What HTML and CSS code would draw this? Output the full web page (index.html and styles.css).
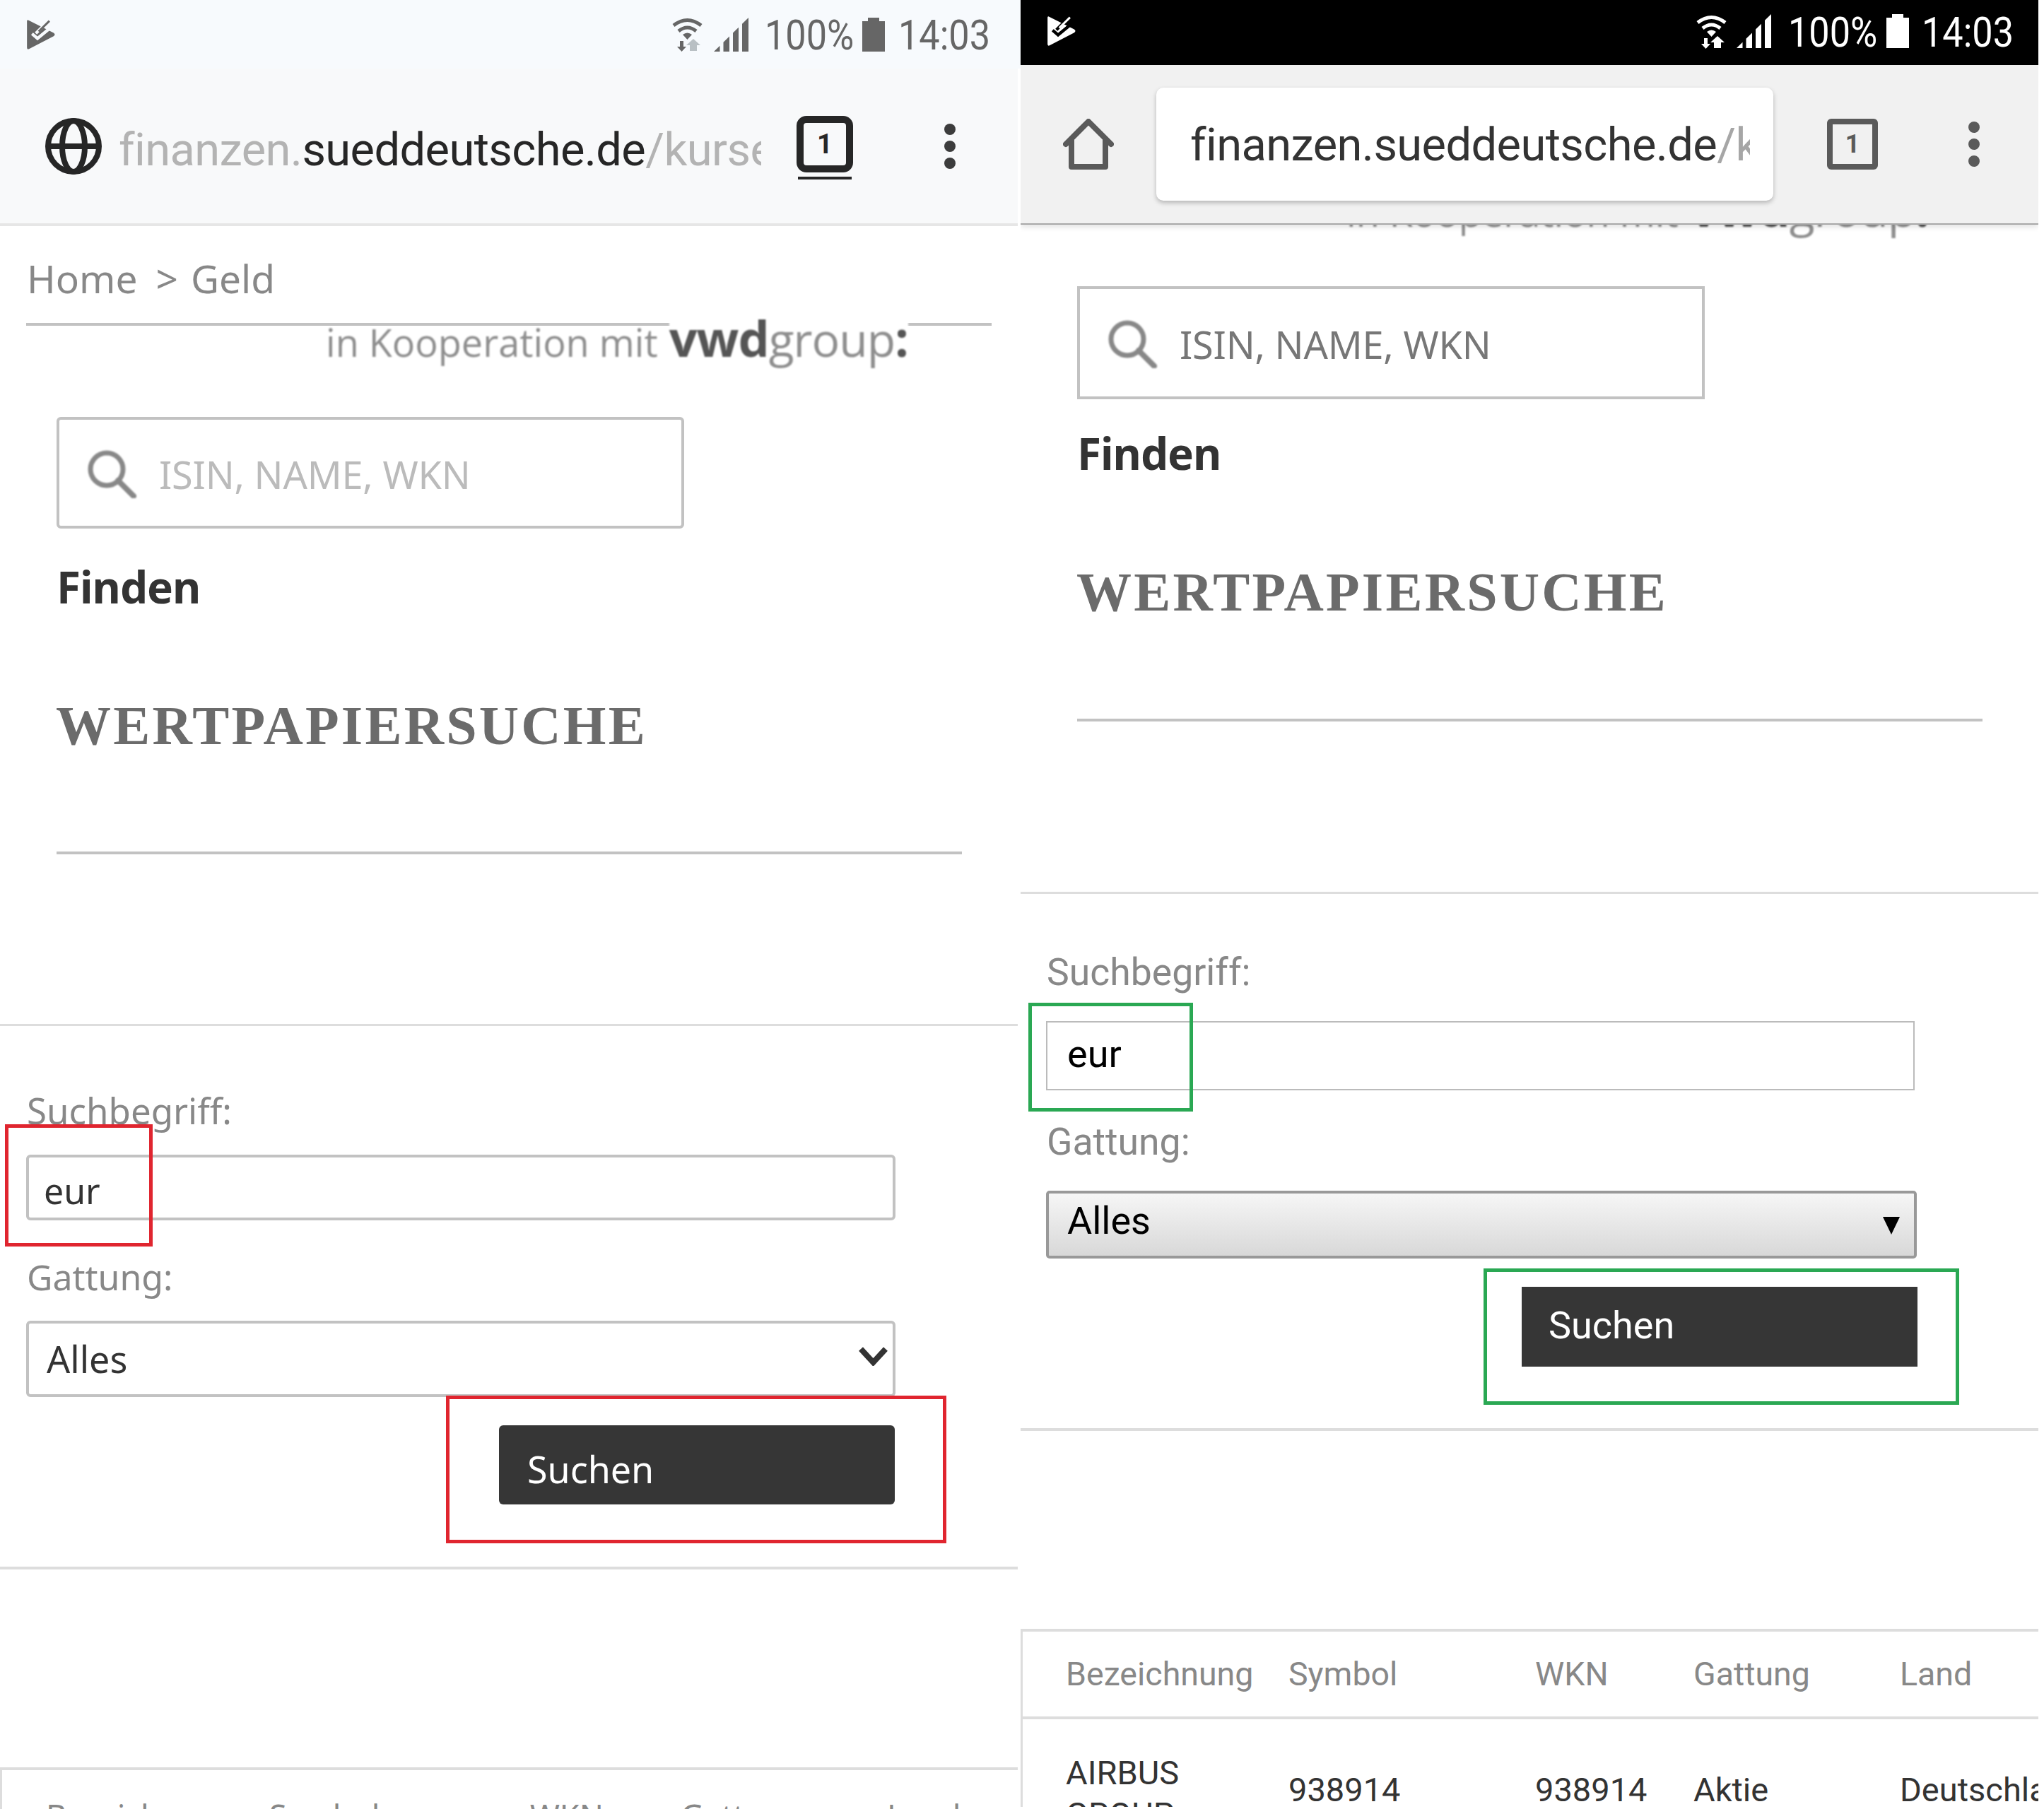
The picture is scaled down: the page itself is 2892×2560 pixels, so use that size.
FILE: index.html
```html
<!DOCTYPE html>
<html lang="de">
<head>
<meta charset="utf-8">
<title>Wertpapiersuche</title>
<link rel="stylesheet" href="styles.css">
</head>
<body>
<svg class="defs" aria-hidden="true">
  <symbol id="kid" viewBox="0 0 120 127">
    <path class="kid-body" d="M0 6Q0-2 7 2L114 56Q124 63 114 70L9 125Q0 129 0 119Z"/>
    <path class="kid-cut" d="M22 60 45 80 108 28M38 58 100-4"/>
    <path class="kid-cut thin" d="M22 60 45 80 92 40"/>
    <path class="kid-arm" d="M50 50 96 5"/>
  </symbol>
  <symbol id="signal" viewBox="0 0 49 48">
    <path d="M0 48 8.500 39.700V48ZM13.500 34.800 22 26.500V48H13.500ZM27 21.600 35 13.700V48H27ZM40 8.800 49 0V48H40Z"/>
  </symbol>
  <symbol id="battery" viewBox="0 0 32 48">
    <path d="M8 0H24V5H32V48H0V5H8Z"/>
  </symbol>
  <symbol id="globe" viewBox="0 0 80 80">
    <g class="line" stroke-width="8"><circle cx="40" cy="40" r="36"/><ellipse cx="40" cy="40" rx="16" ry="36"/><path d="M4 40H76"/></g>
  </symbol>
  <symbol id="home" viewBox="0 0 72 72">
    <g class="line" stroke-width="8" stroke-linecap="round" stroke-linejoin="round"><path d="M4 36 36 4 68 36"/><path d="M12 30V68H60V30"/></g>
  </symbol>
  <symbol id="lens" viewBox="0 0 69 68">
    <g class="line"><circle cx="27" cy="27" r="23" stroke-width="7"/><path d="M43 43 65 65" stroke-width="8" stroke-linecap="round"/></g>
  </symbol>
</svg>

<main class="sheet">
  <section class="phone phone-a">
    <header class="status">
      <svg class="kid"><use href="#kid"/></svg>
      <div class="status-right">
        <svg class="wifi" viewBox="0 0 43 49"><g class="line" stroke-width="5"><path d="M2 12Q21.500-3 41 12"/><path d="M9 20Q21.500 10 34 20"/></g><path d="M15 25Q21.500 20 28 25L21.500 32ZM11 34H16V42H20L13.500 49 7 42H11Z"/><path class="arrow-up" d="M25 48V40H20L30 31 40 40H35V48Z"/></svg>
        <svg class="signal"><use href="#signal"/></svg>
        <span class="pct">100%</span>
        <svg class="battery"><use href="#battery"/></svg>
        <span class="clock">14:03</span>
      </div>
    </header>
    <nav class="toolbar">
      <svg class="globe"><use href="#globe"/></svg>
      <div class="url"><span class="dim">finanzen.</span><span class="host">sueddeutsche.de</span><span class="dim">/kurse</span></div>
      <div class="tabs"><span class="tab-num">1</span></div>
      <div class="dots"><i></i><i></i><i></i></div>
    </nav>
    <div class="crumbs"><span>Home</span><span class="sep">&gt;</span><span>Geld</span></div>
    <div class="logo"><span class="logo-lead">in Kooperation mit</span><span class="logo-mark"><b>vwd</b><span class="logo-group">group</span><b class="logo-colon">:</b></span></div>
    <div class="search"><svg class="lens"><use href="#lens"/></svg><span class="placeholder">ISIN, NAME, WKN</span></div>
    <div class="finden">Finden</div>
    <h1 class="title">WERTPAPIERSUCHE</h1>
    <div class="rule"></div>
    <div class="divider first"></div>
    <form class="form">
      <div class="label term">Suchbegriff:</div>
      <div class="input">eur</div>
      <div class="label kind">Gattung:</div>
      <div class="select"><span>Alles</span><svg class="chevron" viewBox="0 0 41 27"><path class="line" stroke-width="8" d="M3 3 20.500 22 38 3"/></svg></div>
      <div class="submit">Suchen</div>
    </form>
    <div class="divider second"></div>
    <div class="table">
      <div class="thead"><span>Bezeichnung</span><span>Symbol</span><span>WKN</span><span>Gattung</span><span>Land</span></div>
    </div>
    <div class="mark mark-term"></div>
    <div class="mark mark-submit"></div>
  </section>

  <section class="phone phone-b">
    <header class="status">
      <svg class="kid"><use href="#kid"/></svg>
      <div class="status-right">
        <svg class="wifi" viewBox="0 0 43 49"><g class="line" stroke-width="5"><path d="M2 12Q21.500-3 41 12"/><path d="M9 20Q21.500 10 34 20"/></g><path d="M15 25Q21.500 20 28 25L21.500 32ZM11 34H16V42H20L13.500 49 7 42H11Z"/><path class="arrow-up" d="M25 48V40H20L30 31 40 40H35V48Z"/></svg>
        <svg class="signal"><use href="#signal"/></svg>
        <span class="pct">100%</span>
        <svg class="battery"><use href="#battery"/></svg>
        <span class="clock">14:03</span>
      </div>
    </header>
    <nav class="toolbar">
      <svg class="home"><use href="#home"/></svg>
      <div class="omnibox"><div class="url"><span class="host">finanzen.sueddeutsche.de</span><span class="dim">/k</span></div></div>
      <div class="tabs"><span class="tab-num">1</span></div>
      <div class="dots"><i></i><i></i><i></i></div>
    </nav>
    <div class="logo"><span class="logo-lead">in Kooperation mit</span><span class="logo-mark"><b>vwd</b><span class="logo-group">group</span><b class="logo-colon">:</b></span></div>
    <div class="search"><svg class="lens"><use href="#lens"/></svg><span class="placeholder">ISIN, NAME, WKN</span></div>
    <div class="finden">Finden</div>
    <h1 class="title">WERTPAPIERSUCHE</h1>
    <div class="rule"></div>
    <div class="divider first"></div>
    <form class="form">
      <div class="label term">Suchbegriff:</div>
      <div class="input">eur</div>
      <div class="label kind">Gattung:</div>
      <div class="select"><span>Alles</span><svg class="caret" viewBox="0 0 24 25"><path d="M0 0H24L12 25Z"/></svg></div>
      <div class="submit">Suchen</div>
    </form>
    <div class="divider second"></div>
    <div class="table">
      <div class="thead"><span>Bezeichnung</span><span>Symbol</span><span>WKN</span><span>Gattung</span><span>Land</span></div>
      <div class="trow"><span class="name">AIRBUS GROUP</span><span>938914</span><span>938914</span><span>Aktie</span><span>Deutschland</span></div>
    </div>
    <div class="mark mark-term"></div>
    <div class="mark mark-submit"></div>
  </section>
</main>
</body>
</html>
```
FILE: styles.css
```css
* { box-sizing: border-box; }
html, body { margin: 0; padding: 0; background: #fff; }
.defs { position: absolute; width: 0; height: 0; }
.line { fill: none; stroke: currentColor; }

.sheet { display: flex; width: 2892px; height: 2560px; overflow: hidden; }
.phone { position: relative; flex: none; overflow: hidden; background: #fff; font-family: "Noto Sans", sans-serif; }
.phone-a { width: 1444px; height: 2560px; }
.phone-b { width: 1440px; height: 2557px; font-family: Roboto, sans-serif; }

/* status bar */
.status { display: flex; align-items: center; justify-content: space-between; font-family: Roboto, sans-serif; }
.phone-a .status { height: 97px; padding: 0 45px 0 38px; background: #f7fafd; color: #666; --cut: #f7fafd; --up: #b9c0c4; }
.phone-b .status { height: 92px; padding: 0 36px 4px 38px; background: #000; color: #fff; --cut: #000; --up: #fff; }
.status svg { fill: currentColor; flex: none; }
.kid { width: 40px; height: 42px; }
.kid-body { fill: currentColor; }
.kid-cut { fill: none; stroke: var(--cut); stroke-width: 13; }
.kid-cut.thin { stroke-width: 10; }
.kid-arm { fill: none; stroke: currentColor; stroke-width: 9; }
.status-right { display: flex; align-items: center; }
.wifi { width: 43px; height: 49px; }
.arrow-up { fill: var(--up); }
.signal { width: 49px; height: 48px; margin-left: 16px; }
.pct, .clock { display: block; height: 60px; margin-top: 3px; font-size: 60px; line-height: 60px; white-space: nowrap; transform: scaleX(.87); transform-origin: left center; }
.pct { width: 124px; margin-left: 23px; }
.clock { width: 128px; margin-left: 19px; }
.battery { width: 32px; height: 48px; margin-left: 14px; }
.phone-b .signal { margin-left: 14px; }
.phone-b .pct { width: 126px; margin-left: 24px; }
.phone-b .battery { margin-left: 13px; }
.phone-b .clock { width: 129px; margin-left: 18px; }

/* toolbar */
.toolbar { position: relative; z-index: 2; display: flex; align-items: center; font-family: Roboto, sans-serif; font-size: 65px; letter-spacing: -.6px; }
.phone-a .toolbar { width: 1440px; height: 223px; border-bottom: 4px solid #e6e6e6; background: #f8f9fa; color: #262626; }
.phone-b .toolbar { height: 224px; background: #f1f1f1; color: #5a5a5a; box-shadow: 0 2px 0 #a8a8a8, 0 5px 8px rgba(0,0,0,.12); }
.globe { flex: none; width: 80px; height: 80px; margin-left: 64px; }
.home { flex: none; width: 72px; height: 72px; margin-left: 60px; }
.url { overflow: hidden; white-space: nowrap; line-height: 90px; }
.phone-a .url { width: 909px; margin-left: 24px; padding-top: 10px; }
.phone-b .url { width: 792px; padding-top: 2px; color: #333; }
.dim { color: #b3b3b3; }
.phone-b .dim { color: #a6a6a6; }
.host { color: #262626; }
.phone-b .host { color: #333; }
.omnibox { flex: none; width: 873px; height: 160px; margin-left: 60px; padding-left: 48px; display: flex; align-items: center; background: #fff; border-radius: 10px; box-shadow: 0 3px 6px rgba(0,0,0,.25); }
.tabs { position: relative; flex: none; display: flex; align-items: center; justify-content: center; font-weight: 700; line-height: 1; letter-spacing: 0; }
.phone-a .tabs { width: 80px; height: 80px; margin-left: 50px; border: 10px solid #262626; border-radius: 14px; font-size: 38px; margin-top: -5px; }
.phone-a .tabs::after { content: ""; position: absolute; left: -8px; right: -8px; bottom: -20px; height: 4px; background: #262626; }
.phone-b .tabs { width: 72px; height: 72px; margin-left: 76px; border: 8px solid #5a5a5a; border-radius: 6px; font-size: 36px; }
.dots { flex: none; display: flex; flex-direction: column; gap: 8px; }
.phone-a .dots { margin-left: 129px; color: #3c3c3c; }
.phone-b .dots { margin-left: 128px; color: #5a5a5a; }
.dots i { display: block; width: 16px; height: 16px; border-radius: 50%; background: currentColor; }

/* breadcrumb */
.crumbs { display: flex; margin-left: 37px; width: 1366px; height: 141px; padding: 39px 0 0 1px; border-bottom: 4px solid #c2c2c2; font-size: 55px; line-height: 70px; color: #888; }
.sep { margin: 0 18px 0 26px; }

/* partner logo */
.logo { position: relative; display: flex; align-items: baseline; margin-left: 461px; width: 826px; height: 80px; color: #8e8e8e; font-family: "Open Sans", sans-serif; font-size: 54px; line-height: 66px; white-space: nowrap; filter: blur(.8px); }
.phone-a .logo { margin-top: -16px; }
.phone-b .logo { margin-top: -55px; }
.logo-mark { display: flex; align-items: baseline; margin-left: 16px; background: #fff; }
.logo-mark b { font-size: 70px; letter-spacing: -1px; color: #555; }
.logo-group { font-size: 66px; letter-spacing: -1px; color: #8e8e8e; }
.logo-colon { color: #444; }

/* search box */
.search { display: flex; align-items: center; gap: 32px; width: 888px; margin-left: 80px; padding-left: 40px; border: 4px solid #c2c2c2; }
.phone-a .search { height: 158px; margin-top: 65px; border-radius: 6px; }
.phone-b .search { height: 160px; margin-top: 64px; }
.lens { flex: none; width: 69px; height: 68px; color: #888; filter: blur(.8px); margin-top: 4px; }
.placeholder { font-family: "Noto Sans", sans-serif; font-size: 54px; letter-spacing: -.2px; line-height: 70px; padding-top: 3px; }
.phone-a .placeholder { color: #bbb; }
.phone-b .placeholder { color: #777; }

.finden { margin-left: 80px; height: 80px; font-family: "Noto Sans", sans-serif; font-weight: 700; font-size: 62px; letter-spacing: -1px; line-height: 80px; color: #333; }
.phone-a .finden { margin-top: 42px; }
.phone-b .finden { margin-top: 36px; }

.title { margin: 0 0 0 79px; height: 90px; font-family: "Liberation Serif", serif; font-weight: 700; font-size: 78px; line-height: 90px; letter-spacing: 3.2px; color: #6b6b6b; white-space: nowrap; }
.phone-a .title { margin-top: 112px; }
.phone-b .title { margin-top: 112px; }

.rule { height: 4px; width: 1281px; margin-left: 80px; background: #c2c2c2; }
.phone-a .rule { margin-top: 133px; }
.phone-b .rule { margin-top: 134px; }

.divider { background: #ddd; }
.phone-a .divider { width: 1440px; }
.divider.first { height: 3px; margin-top: 240px; }
.phone-b .divider.first { margin-top: 241px; }
.phone-a .divider.second { height: 4px; margin-top: 88px; }
.phone-b .divider.second { height: 4px; margin-top: 87px; }

/* form */
.form { display: flex; flex-direction: column; align-items: flex-start; }
.phone-a .form { padding-left: 37px; font-size: 52px; }
.phone-b .form { padding-left: 36px; font-size: 54px; }
.label { height: 60px; line-height: 60px; color: #888; white-space: nowrap; }
.phone-a .label { font-size: 50px; }
.phone-b .label { font-size: 53.5px; }
.phone-a .term { margin-top: 89px; padding-left: 1px; font-size: 51px; }
.phone-b .term { margin-top: 81px; padding-left: 1px; }
.phone-a .kind { margin-top: 50px; padding-left: 1px; }
.phone-b .kind { margin-top: 43px; padding-left: 1px; }
.input { display: flex; align-items: center; }
.phone-a .input { width: 1230px; height: 93px; margin-top: 33px; padding: 8px 0 0 21px; border: 4px solid #c2c2c2; border-radius: 6px; color: #333; font-size: 50px; }
.phone-b .input { width: 1229px; height: 98px; margin-top: 39px; padding: 0 0 6px 28px; border: 2px solid #bbb; color: #000; }
.select { display: flex; align-items: center; justify-content: space-between; }
.phone-a .select { width: 1230px; height: 108px; margin-top: 32px; padding: 0 7px 0 25px; border: 4px solid #c2c2c2; border-radius: 6px; color: #333; }
.phone-a .select span { margin-top: -2px; }
.phone-b .select { width: 1232px; height: 96px; margin-top: 39px; padding: 0 20px 0 26px; border: 4px solid #999; border-radius: 5px; background: linear-gradient(#f6f6f6, #d8d8d8); color: #000; }
.phone-b .select span { margin-top: -11px; }
.chevron { flex: none; width: 41px; height: 27px; margin-top: -8px; color: #333; }
.caret { flex: none; width: 24px; height: 25px; fill: #000; margin-top: 2px; }
.submit { display: flex; align-items: center; margin-top: 40px; background: #363636; color: #fff; }
.phone-a .submit { width: 560px; height: 112px; margin-left: 669px; padding: 10px 0 0 40px; border-radius: 6px; }
.phone-b .submit { width: 560px; height: 113px; margin-left: 673px; padding: 0 0 4px 38px; }

/* results */
.table { border-top: 4px solid #ddd; border-left: 3px solid #ddd; }
.phone-a .table { width: 1440px; margin-top: 280px; }
.phone-b .table { margin-top: 280px; }
.thead, .trow { display: grid; white-space: nowrap; }
.phone-a .thead { grid-template-columns: 316px 369px 213px 292px 1fr; padding: 35px 0 0 62px; font-size: 45px; line-height: 60px; color: #888; }
.phone-b .thead { grid-template-columns: 315px 349px 224px 292px 1fr; height: 124px; padding: 30px 0 0 61px; border-bottom: 4px solid #ddd; font-size: 46.500px; line-height: 60px; color: #888; }
.trow { grid-template-columns: 315px 349px 224px 292px 1fr; padding: 46px 0 0 61px; font-size: 47px; line-height: 59px; color: #333; align-items: start; }
.trow span { margin-top: 24px; }
.trow .name { width: min-content; margin-top: 0; white-space: normal; }

/* annotations */
.mark { position: absolute; }
.phone-a .mark { border: 5px solid #e0252f; }
.phone-b .mark { border: 5px solid #2aa853; }
.phone-a .mark-term { left: 7px; top: 1591px; width: 209px; height: 173px; }
.phone-a .mark-submit { left: 631px; top: 1975px; width: 708px; height: 209px; }
.phone-b .mark-term { left: 11px; top: 1419px; width: 233px; height: 154px; }
.phone-b .mark-submit { left: 655px; top: 1795px; width: 673px; height: 193px; }
```
